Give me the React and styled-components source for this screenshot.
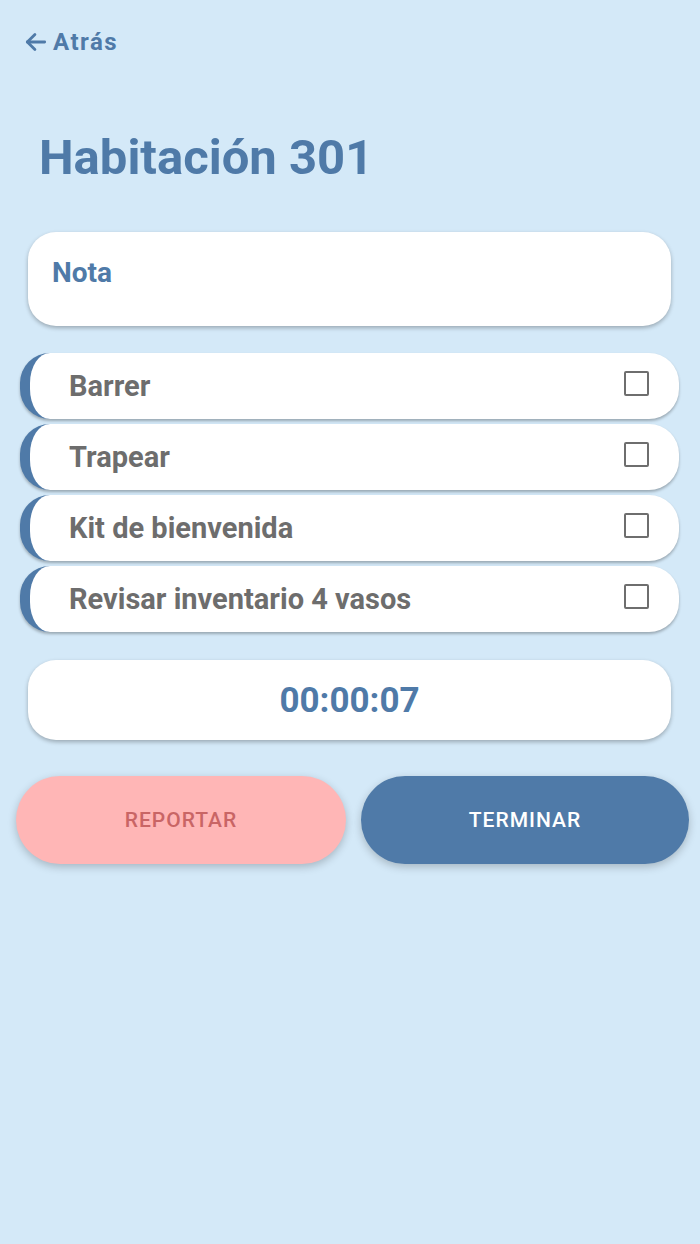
import React from "react";
import styled, { createGlobalStyle } from "styled-components";

const blue = "#4f7aa8";

const GlobalStyle = createGlobalStyle`
  html, body {
    margin: 0;
    padding: 0;
    background: #d4e9f8;
    font-family: Roboto, "Noto Sans", sans-serif;
  }
`;

const Page = styled.div`
  min-height: 1244px;
  background: #d4e9f8;
  box-sizing: border-box;
  padding-top: 27px;
`;

const BackLink = styled.a`
  display: flex;
  align-items: center;
  gap: 4px;
  margin-left: 23px;
  height: 30px;
  color: ${blue};
  font-size: 24px;
  font-weight: 700;
  letter-spacing: 1.5px;
  text-decoration: none;
`;

const Title = styled.h1`
  margin: 73px 0 0 39px;
  height: 56px;
  line-height: 56px;
  font-size: 49px;
  font-weight: 700;
  color: ${blue};
`;

const Card = styled.div`
  margin: 0 29px 0 28px;
  background: #fff;
  border-radius: 28px;
  box-shadow: 0 2px 4px rgba(0, 0, 0, 0.28);
`;

const NoteCard = styled(Card)`
  margin-top: 46px;
  height: 94px;
  box-sizing: border-box;
  padding: 24px 24px;
  font-size: 28px;
  line-height: 34px;
  font-weight: 700;
  color: ${blue};
`;

const TaskList = styled.div`
  display: flex;
  flex-direction: column;
  gap: 5px;
  margin: 27px 21px 0 20px;
`;

const Task = styled.label`
  display: flex;
  align-items: center;
  justify-content: space-between;
  height: 66px;
  box-sizing: border-box;
  padding: 0 30px 0 39px;
  background: #fff;
  border-left: 10px solid ${blue};
  border-radius: 30px;
  box-shadow: 0 2px 3px rgba(0, 0, 0, 0.28);
  font-size: 29px;
  font-weight: 700;
  color: #6d6d6d;
`;

const Box = styled.span`
  width: 21px;
  height: 21px;
  border: 2px solid #6e6e6e;
  border-radius: 2px;
  margin-top: -6px;
`;

const TimerCard = styled(Card)`
  margin-top: 28px;
  height: 80px;
  display: flex;
  align-items: center;
  justify-content: center;
  font-size: 35px;
  font-weight: 700;
  color: ${blue};
`;

const Actions = styled.div`
  display: grid;
  grid-template-columns: 330px 328px;
  gap: 15px;
  margin: 36px 0 0 16px;
`;

const Button = styled.button`
  height: 88px;
  border: none;
  border-radius: 44px;
  background: ${({ $primary }) => ($primary ? blue : "#ffb6b6")};
  color: ${({ $primary }) => ($primary ? "#fff" : "#c96565")};
  font-family: Roboto, sans-serif;
  font-size: 21px;
  font-weight: 500;
  letter-spacing: 1px;
  box-shadow: 0 3px 8px rgba(0, 0, 0, 0.22);
`;

const tasks = ["Barrer", "Trapear", "Kit de bienvenida", "Revisar inventario 4 vasos"];

export default function App() {
  return (
    <Page>
      <GlobalStyle />
      <BackLink href="#">
        <svg width="26" height="26" viewBox="0 0 24 24" fill="none" stroke={blue} strokeWidth="2.6" strokeLinecap="round" strokeLinejoin="round">
          <path d="M20 12H4" />
          <path d="M11 5l-7 7 7 7" />
        </svg>
        Atrás
      </BackLink>
      <Title>Habitación 301</Title>
      <NoteCard>Nota</NoteCard>
      <TaskList>
        {tasks.map((t) => (
          <Task key={t}>
            {t}
            <Box />
          </Task>
        ))}
      </TaskList>
      <TimerCard>00:00:07</TimerCard>
      <Actions>
        <Button>REPORTAR</Button>
        <Button $primary>TERMINAR</Button>
      </Actions>
    </Page>
  );
}
